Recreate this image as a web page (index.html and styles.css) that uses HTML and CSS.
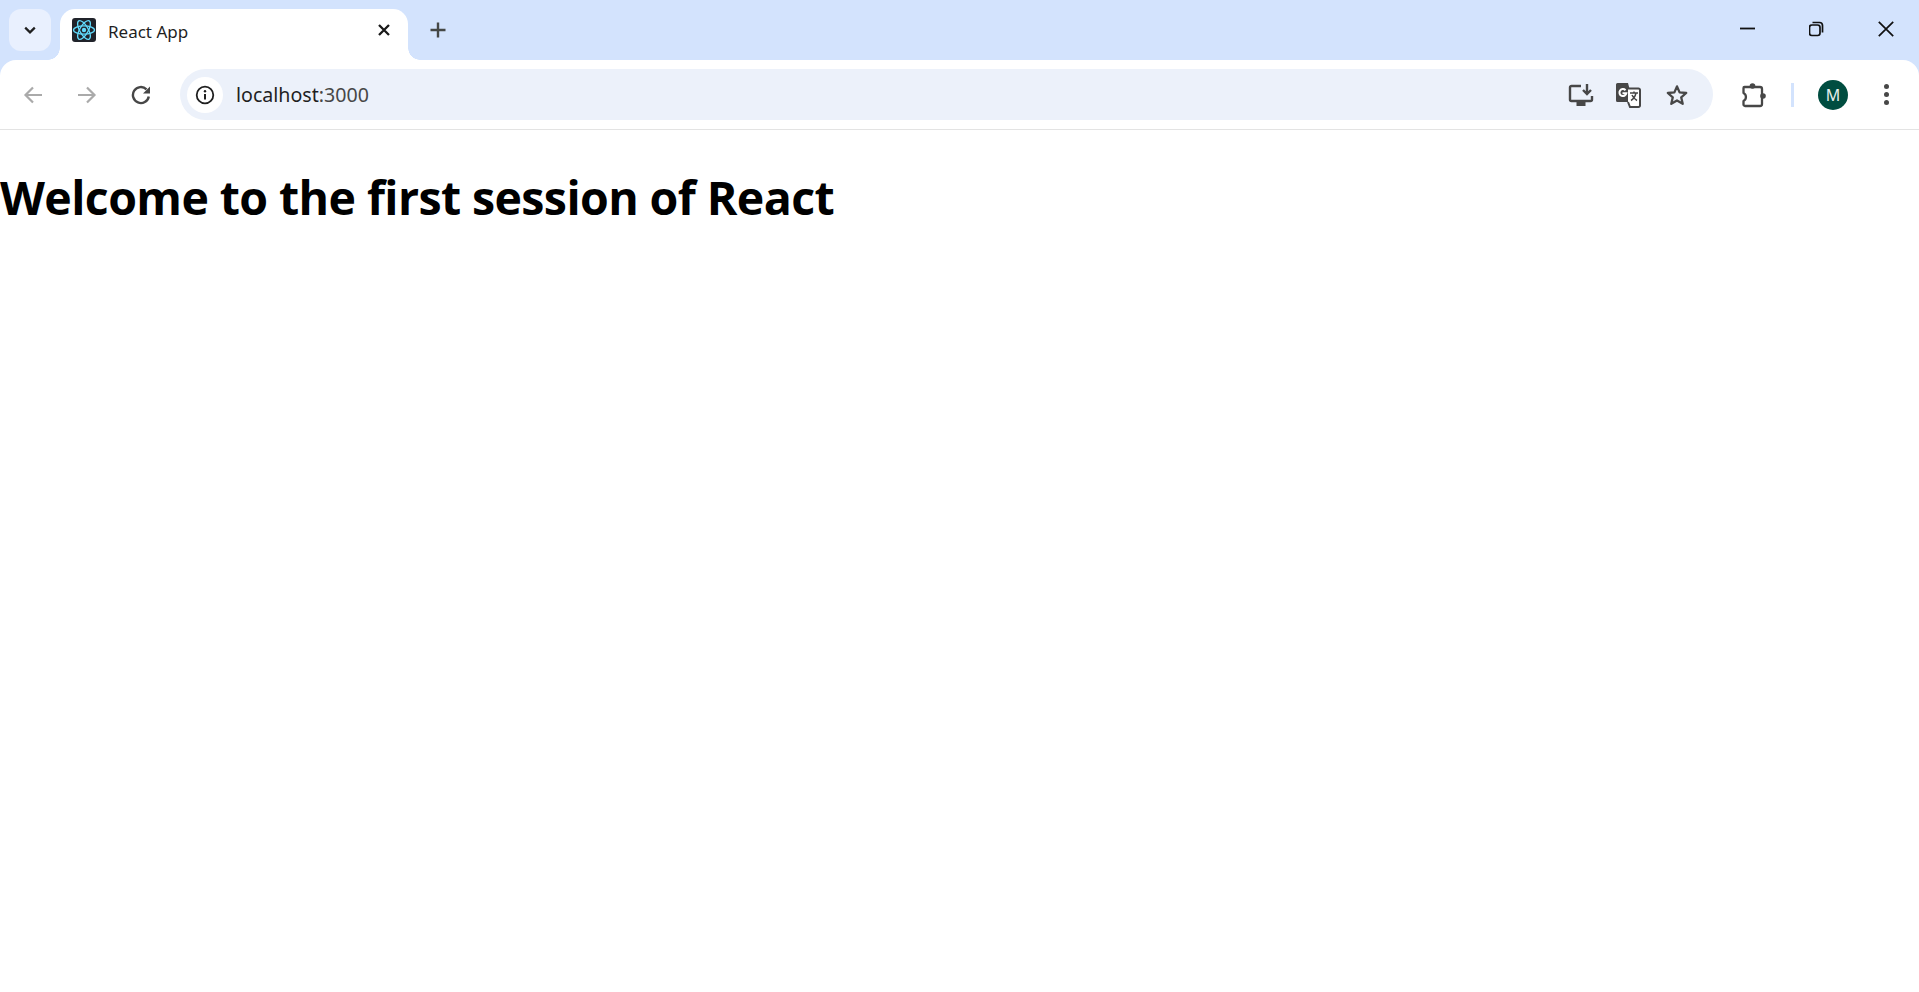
FILE: index.html
```html
<!DOCTYPE html>
<html>
  <head>
    <meta charset="utf-8">
    <title>React App</title>
    <link rel="stylesheet" href="styles.css">
  </head>
  <body>
    <header class="browser">
      <div class="tabstrip">
        <button class="tab-search" type="button">
          <svg width="18" height="18" viewBox="0 0 18 18"><path d="M4.2 6.6 9 11.4l4.8-4.8" fill="none" stroke="#1f1f1f" stroke-width="2.2"/></svg>
        </button>
        <div class="tab">
          <svg class="favicon" width="24" height="24" viewBox="0 0 24 24">
            <rect width="24" height="24" rx="3" fill="#20232a"/>
            <circle cx="12" cy="12" r="2.2" fill="#61dafb"/>
            <g fill="none" stroke="#61dafb" stroke-width="1.3">
              <ellipse cx="12" cy="12" rx="10.500" ry="4.200"/>
              <ellipse cx="12" cy="12" rx="10.500" ry="4.200" transform="rotate(60 12 12)"/>
              <ellipse cx="12" cy="12" rx="10.500" ry="4.200" transform="rotate(120 12 12)"/>
            </g>
          </svg>
          <span class="tab-title">React App</span>
          <svg class="tab-close" width="14" height="14" viewBox="0 0 14 14"><path d="M2 2l10 10M12 2 2 12" stroke="#1a1a1a" stroke-width="2.300"/></svg>
        </div>
        <button class="new-tab" type="button">
          <svg width="18" height="18" viewBox="0 0 18 18"><path d="M9 1.500v15M1.500 9h15" stroke="#444746" stroke-width="2.400"/></svg>
        </button>
        <div class="window-controls">
          <svg width="16" height="16" viewBox="0 0 16 16"><path d="M0 7.500h15" stroke="#111" stroke-width="1.800"/></svg>
          <svg width="16" height="16" viewBox="1 0 16 16" fill="none" stroke="#111" stroke-width="1.700"><rect x="1.500" y="4" width="10.500" height="10.500" rx="2.400"/><path d="M4.500 1.500h7a3 3 0 0 1 3 3v7"/></svg>
          <svg width="16" height="16" viewBox="0 0 16 16"><path d="M.8.8l14.400 14.400M15.200.8.8 15.200" stroke="#111" stroke-width="1.700"/></svg>
        </div>
      </div>
      <div class="toolbar">
        <span class="tool-btn">
          <svg width="20" height="20" viewBox="0 0 20 20" fill="none" stroke="#aaa" stroke-width="2.200"><path d="M19 10H2.500M10 2.500 2.500 10l7.500 7.500"/></svg>
        </span>
        <span class="tool-btn">
          <svg width="20" height="20" viewBox="0 0 20 20" fill="none" stroke="#aaa" stroke-width="2.200"><path d="M1 10h16.500M10 2.500l7.500 7.500-7.500 7.500"/></svg>
        </span>
        <span class="tool-btn">
          <svg width="20" height="20" viewBox="0 0 20 20" fill="none" stroke="#474747" stroke-width="2.400"><path d="M17.800 11.500A8 8 0 1 1 15.500 4.300"/><path d="M12 8.500h7V1.500z" fill="#474747" stroke="none"/></svg>
        </span>
        <div class="omnibox">
          <span class="site-info">
            <svg width="20" height="20" viewBox="0 0 20 20"><circle cx="10" cy="10" r="8.300" fill="none" stroke="#1f1f1f" stroke-width="1.800"/><path d="M10 9v5.500" stroke="#1f1f1f" stroke-width="2"/><circle cx="10" cy="6.300" r="1.200" fill="#1f1f1f"/></svg>
          </span>
          <span class="url">localhost<span class="url-port">:3000</span></span>
          <span class="omni-icons">
            <svg width="26" height="24" viewBox="0 0 26 24" fill="none" stroke="#474747" stroke-width="2.400"><path d="M13 3H3.500A1.500 1.500 0 0 0 2 4.500v12A1.500 1.500 0 0 0 3.500 18h19a1.500 1.500 0 0 0 1.500-1.500V13"/><path d="M19 1v9M15 7l4 4 4-4"/><path d="M8.500 20.500h9" stroke-width="5"/></svg>
            <svg class="translate-icon" width="26" height="26" viewBox="0 0 26 26"><path d="M2.500 1h10.500l5 19H2.500A1.500 1.500 0 0 1 1 18.500v-16A1.500 1.500 0 0 1 2.500 1z" fill="#474747"/><path d="M13 6.500h10.500a1.500 1.500 0 0 1 1.500 1.500v15.500a1.500 1.500 0 0 1-1.500 1.500H15l-2-5" fill="#fff" stroke="#474747" stroke-width="2"/><path d="M10.500 8.200a3.500 3.500 0 1 0 .9 3H7.500" fill="none" stroke="#fff" stroke-width="2"/><path d="M15 11h8M19 9.500v1.500M21 11c-.8 3.500-2.500 6-5 7.500M17 13c.8 2 2.500 4 5 5.500" fill="none" stroke="#474747" stroke-width="1.500"/></svg>
            <svg width="24" height="24" viewBox="0 0 24 24"><path d="M12 3.400l2.600 6 6.600.6-5 4.300 1.500 6.500-5.700-3.400-5.700 3.400 1.500-6.500-5-4.300 6.600-.6z" fill="none" stroke="#474747" stroke-width="2.300" stroke-linejoin="round"/></svg>
          </span>
        </div>
        <span class="extensions">
          <svg width="26" height="26" viewBox="0 0 26 26"><path d="M3.500 5h15.500a2 2 0 0 1 2 2v15a2 2 0 0 1-2 2H4a1.500 1.500 0 0 1-1.500-1.500V19a4.500 4.500 0 0 0 0-8V6a1 1 0 0 1 1-1z" fill="none" stroke="#474747" stroke-width="2.300" stroke-linejoin="round"/><circle cx="11.500" cy="4" r="2.800" fill="#474747"/><circle cx="22" cy="14" r="2.800" fill="#474747"/></svg>
        </span>
        <span class="toolbar-divider"></span>
        <span class="avatar">M</span>
        <span class="menu-dots"><i></i><i></i><i></i></span>
      </div>
    </header>
    <main>
      <h1>Welcome to the first session of React</h1>
    </main>
  </body>
</html>
```

FILE: styles.css
```css
* {
  box-sizing: border-box;
}

body {
  margin: 0;
  background: #fff;
  font-family: "Open Sans", "Liberation Sans", sans-serif;
}

svg {
  display: block;
  flex: none;
}

button {
  border: none;
  padding: 0;
  background: none;
}

.browser {
  background: #d3e3fd;
}

.tabstrip {
  display: flex;
  align-items: flex-end;
  height: 60px;
  padding-left: 9px;
}

.tab-search {
  display: flex;
  align-items: center;
  justify-content: center;
  width: 42px;
  height: 42px;
  margin-bottom: 9px;
  border-radius: 12px;
  background: #e9f0fe;
}

.tab {
  position: relative;
  display: flex;
  align-items: center;
  width: 348px;
  height: 51px;
  margin-left: 9px;
  padding: 0 17px 9px 12px;
  border-radius: 15px 15px 0 0;
  background: #fff;
}

/* the curves at the foot of the tab */
.tab::before,
.tab::after {
  content: "";
  position: absolute;
  bottom: 0;
  width: 12px;
  height: 12px;
  background: radial-gradient(circle at 0 0, #d3e3fd 11.500px, #fff 12px);
}

.tab::before {
  left: -12px;
}

.tab::after {
  right: -12px;
  background: radial-gradient(circle at 100% 0, #d3e3fd 11.500px, #fff 12px);
}

.tab-title {
  margin: 2px 0 0 12px;
  font-family: "Noto Sans", sans-serif;
  font-size: 17px;
  color: #1f1f1f;
}

.tab-close {
  margin-left: auto;
}

.new-tab {
  margin: 0 0 21px 21px;
}

.window-controls {
  display: flex;
  gap: 53px;
  margin: 0 25px 23px auto;
}

.toolbar {
  display: flex;
  align-items: center;
  height: 70px;
  border-bottom: 1px solid #e3e3e3;
  padding-left: 9px;
  border-radius: 16px 16px 0 0;
  background: #fff;
}

.tool-btn {
  display: flex;
  align-items: center;
  justify-content: center;
  width: 48px;
  margin-right: 6px;
}

.omnibox {
  display: flex;
  align-items: center;
  width: 1533px;
  height: 51px;
  margin-left: 9px;
  padding: 0 24px 0 7px;
  border-radius: 26px;
  background: #ecf1fa;
}

.site-info {
  display: flex;
  align-items: center;
  justify-content: center;
  width: 36px;
  height: 36px;
  border-radius: 50%;
  background: #fff;
}

.url {
  margin-left: 13px;
  font-family: "Noto Sans", sans-serif;
  font-size: 19.600px;
  color: #1f1f1f;
}

.url-port {
  color: #474747;
}

.omni-icons {
  display: flex;
  align-items: center;
  gap: 22px;
  margin-left: auto;
}

.translate-icon {
  margin: 0 2px 0 -1px;
}

.extensions {
  margin-left: 28px;
}

.toolbar-divider {
  width: 3px;
  height: 24px;
  margin-left: 24px;
  background: #d3e3fd;
}

.avatar {
  display: flex;
  align-items: center;
  justify-content: center;
  width: 30px;
  height: 30px;
  margin-left: 24px;
  border-radius: 50%;
  background: #004d40;
  color: #e6eeec;
  font-family: "Noto Sans", sans-serif;
  font-size: 16px;
}

.menu-dots {
  display: flex;
  flex-direction: column;
  gap: 3px;
  margin-left: 36px;
}

.menu-dots i {
  width: 5px;
  height: 5px;
  border-radius: 50%;
  background: #474747;
}

h1 {
  margin: 0;
  padding-top: 35px;
  font-family: "Open Sans", sans-serif;
  font-size: 46.500px;
  font-weight: 700;
  letter-spacing: -0.600px;
  line-height: 64px;
  color: #000;
}
```
